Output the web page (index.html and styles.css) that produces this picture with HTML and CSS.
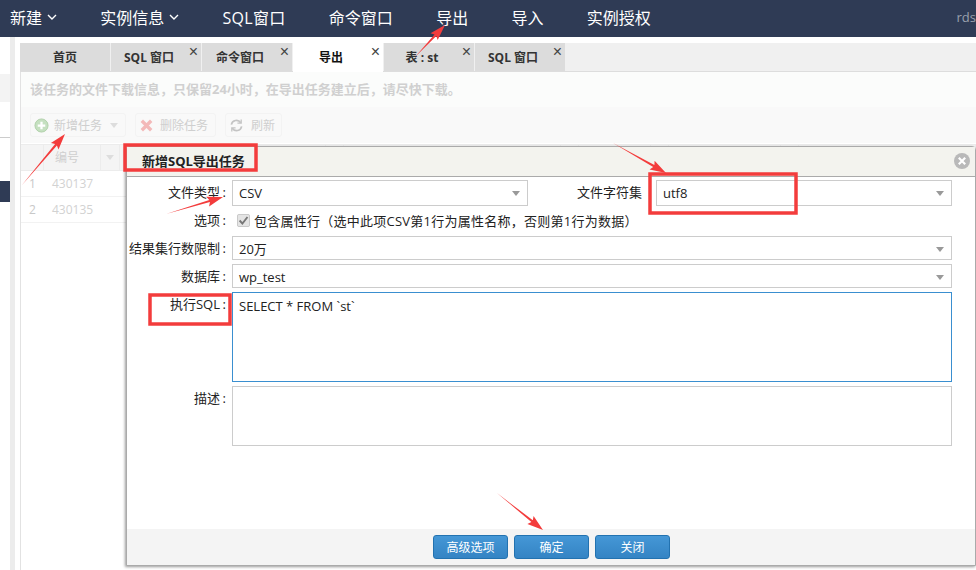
FILE: index.html
```html
<!DOCTYPE html>
<html lang="zh-CN">
<head>
<meta charset="utf-8">
<title>新增SQL导出任务</title>
<link rel="stylesheet" href="styles.css">
</head>
<body>
<nav class="nav">
  <span class="nav-item">新建<svg class="chev" viewBox="0 0 10 6"><path d="M1 1l4 4 4-4"/></svg></span>
  <span class="nav-item">实例信息<svg class="chev" viewBox="0 0 10 6"><path d="M1 1l4 4 4-4"/></svg></span>
  <span class="nav-item nav-sql">SQL窗口</span>
  <span class="nav-item">命令窗口</span>
  <span class="nav-item">导出</span>
  <span class="nav-item">导入</span>
  <span class="nav-item">实例授权</span>
  <span class="nav-user">rds</span>
</nav>
<div class="main">
  <aside class="side">
    <div class="side-list">
      <div class="side-gray"></div>
      <div class="side-line"></div>
      <div class="side-active"></div>
    </div>
    <div class="side-bar"></div>
    <div class="side-space"></div>
  </aside>
  <section class="work">
    <div class="tabs">
      <div class="tab tab-home">首页</div>
      <div class="tab">SQL 窗口<span class="tab-x">×</span></div>
      <div class="tab">命令窗口<span class="tab-x">×</span></div>
      <div class="tab tab-on">导出<span class="tab-x">×</span></div>
      <div class="tab">表 : st<span class="tab-x">×</span></div>
      <div class="tab">SQL 窗口<span class="tab-x">×</span></div>
    </div>
    <div class="notice">该任务的文件下载信息，只保留24小时，在导出任务建立后，请尽快下载。</div>
    <div class="toolbar">
      <div class="tool tool-add">
        <svg class="tool-ico" viewBox="0 0 16 16"><circle cx="8" cy="8" r="7" fill="#c5e0c0" stroke="#b0d0aa"/><path d="M8 4v8M4 8h8" stroke="#fff" stroke-width="2.4"/></svg>
        新增任务<i class="tool-caret"></i>
      </div>
      <div class="tool tool-del">
        <svg class="tool-ico" viewBox="0 0 16 16"><path d="M3 3l10 10M13 3L3 13" stroke="#f3b9b9" stroke-width="3.6"/></svg>
        删除任务
      </div>
      <div class="tool tool-ref">
        <svg class="tool-ico" viewBox="0 0 16 16" fill="none" stroke="#c4c4c4" stroke-width="1.8"><path d="M2.500 7a5.500 5.500 0 0 1 10-2M13.500 9a5.500 5.500 0 0 1-10 2"/><path d="M13 1.500v4H9M3 14.500v-4h4" stroke-width="1.400"/></svg>
        刷新
      </div>
    </div>
    <div class="grid-head">
      <div class="gh"></div>
      <div class="gh gh-name">编号</div>
      <div class="gh gh-menu"><i class="tool-caret"></i></div>
      <div class="gh"></div><div class="gh"></div>
      <div class="gh"></div><div class="gh"></div>
      <div class="gh"></div><div class="gh"></div>
      <div class="gh"></div><div class="gh"></div>
      <div class="gh"></div>
    </div>
    <div class="grid-row"><span class="grid-no">1</span><span class="grid-id">430137</span></div>
    <div class="grid-row"><span class="grid-no">2</span><span class="grid-id">430135</span></div>
  </section>
</div>

<div class="modal">
  <header class="modal-head">
    <span class="modal-title">新增SQL导出任务</span>
    <svg class="modal-close" viewBox="0 0 16 16"><circle cx="8" cy="8" r="8" fill="#b9b9b9"/><path d="M4.800 4.800l6.400 6.400M11.200 4.800l-6.400 6.400" stroke="#fff" stroke-width="2.200"/></svg>
  </header>
  <div class="form">
    <label class="lbl">文件类型<span class="colon">:</span></label>
    <div class="field-pair">
      <div class="sel">CSV<i class="sel-caret"></i></div>
      <label class="lbl lbl-mid">文件字符集</label>
      <div class="sel">utf8<i class="sel-caret"></i></div>
    </div>
    <label class="lbl">选项<span class="colon">:</span></label>
    <div class="opt">
      <svg class="check" viewBox="0 0 14 14"><rect x=".5" y=".5" width="13" height="13" rx="1.500" fill="#e4e4e4" stroke="#c4c4c4"/><path d="M2.800 7l3 3.200 5.500-7" fill="none" stroke="#777" stroke-width="2"/></svg>
      包含属性行（选中此项CSV第1行为属性名称，否则第1行为数据）
    </div>
    <label class="lbl">结果集行数限制<span class="colon">:</span></label>
    <div class="sel">20万<i class="sel-caret"></i></div>
    <label class="lbl">数据库<span class="colon">:</span></label>
    <div class="sel">wp_test<i class="sel-caret"></i></div>
    <label class="lbl">执行SQL<span class="colon">:</span></label>
    <div class="area area-on">SELECT * FROM `st`</div>
    <label class="lbl">描述<span class="colon">:</span></label>
    <div class="area area-desc"></div>
  </div>
  <footer class="modal-foot">
    <button class="btn">高级选项</button>
    <button class="btn">确定</button>
    <button class="btn">关闭</button>
  </footer>
</div>

<svg class="marks" viewBox="0 0 976 570">
  <g class="mark-box">
    <rect x="125" y="145" width="131" height="25"/>
    <rect x="650" y="174" width="146" height="39"/>
    <rect x="150" y="295" width="80" height="29"/>
  </g>
  <g class="mark-arrow">
    <polygon points="415,57 434.500,34.400 430.500,33.300 445,25 437.700,40.100 436.300,36"/>
    <polygon points="22,185 55.100,143.900 50.900,143 65,134 58.500,149.400 56.900,145.500"/>
    <polygon points="166,214 209.300,199.900 206.300,196.800 223,197 209.100,206.400 209.900,202.100"/>
    <polygon points="613,143 654.400,165.100 654.600,160.700 666,173 649.600,169.500 653.200,167.100"/>
    <polygon points="497,493 532.800,520.300 533.600,516.100 543,530 527.400,523.900 531.400,522.100"/>
  </g>
</svg>
</body>
</html>
```
FILE: styles.css
```css
* { box-sizing: border-box; }
html, body { margin: 0; height: 100%; }
body {
  width: 976px;
  height: 570px;
  overflow: hidden;
  position: relative;
  background: #fff;
  color: #222;
  font-family: "Open Sans", "Noto Sans CJK SC", sans-serif;
  font-size: 13px;
}

/* top nav */
.nav {
  height: 37px;
  background: #2f3b55;
  display: flex;
  align-items: center;
  gap: 43.250px;
  padding: 0 0 3px 10px;
  color: #fff;
  font-size: 16px;
}
.nav-item { display: flex; align-items: center; white-space: nowrap; }
.nav-sql { letter-spacing: .3px; }
.chev { width: 10px; height: 6px; margin-left: 5px; fill: none; stroke: #fff; stroke-width: 1.4; }
.nav-user { flex: 1; text-align: right; font-size: 13px; color: #9aa0ad; }

/* shell */
.main { display: flex; height: 533px; }
.side { width: 20px; display: flex; flex: none; }
.side-list { width: 10px; }
.side-gray { height: 28px; margin-top: 37px; background: #f3f3f3; }
.side-line { height: 1px; margin-top: 35px; background: #ccc; }
.side-active { height: 21px; margin-top: 43px; background: #2f3b55; }
.side-bar { width: 5px; background: #ececec; }
.side-space { width: 5px; }
.work { flex: 1; min-width: 0; border-left: 1px solid #e2e2e2; margin-top: 6px; background: linear-gradient(#fbfcfb 0, #fbfcfb 64px, #f9f9f9 64px, #f9f9f9 100px, #fff 100px); }

/* tabs */
.tabs {
  height: 29px;
  margin-left: -1px;
  display: flex;
  gap: 1px;
  background: #f0f0f0;
  border-bottom: 1px solid #ddd;
}
.tab {
  position: relative;
  width: 90px;
  height: 28px;
  padding-right: 14px;
  background: #dcdcdc;
  color: #333;
  font-size: 12px;
  font-weight: 700;
  line-height: 29px;
  text-align: center;
  white-space: nowrap;
}
.tab-home { padding-right: 0; }
.tab-on { background: #fff; color: #111; height: 29px; }
.tab-x {
  position: absolute;
  top: 2px;
  right: 3px;
  font-family: "Liberation Sans", sans-serif;
  font-size: 16px;
  font-weight: 400;
  line-height: 14px;
  color: #444;
}

/* dimmed background page */
.notice {
  height: 36px;
  padding: 0 0 2px 9px;
  line-height: 34px;
  font-size: 13px;
  font-weight: 700;
  color: #d0d0d0;
}
.toolbar { height: 36px; padding: 5px 0 0 9px; display: flex; gap: 9px; }
.tool {
  height: 24px;
  display: flex;
  align-items: center;
  padding-left: 3px;
  border: 1px solid #f3f3f3;
  border-radius: 3px;
  color: #cfcfcf;
  font-size: 12px;
}
.tool-add { width: 96px; gap: 5px; }
.tool-del { width: 81px; gap: 6px; }
.tool-ref { width: 57px; gap: 7px; }
.tool-ico { width: 15px; height: 15px; flex: none; }
.tool-caret {
  width: 0;
  height: 0;
  margin-left: 3px;
  border: 4px solid transparent;
  border-top: 5px solid #ddd;
  border-bottom: 0;
}
.grid-head {
  height: 27px;
  display: grid;
  grid-template-columns: 23px 57px 19px 206px 18px 217px 18px 72px 18px 112px 18px 1fr;
  background: #f4f4f4;
  border-top: 1px solid #ececec;
  border-bottom: 1px solid #ececec;
}
.gh { border-right: 1px solid #ececec; color: #cfcfcf; font-size: 12px; line-height: 25px; text-align: center; }
.gh-name { text-align: left; padding-left: 11px; }
.gh-menu { display: flex; align-items: center; justify-content: center; }
.gh-menu .tool-caret { margin-left: 0; }
.grid-row {
  width: 105px;
  height: 26px;
  display: flex;
  align-items: center;
  border-bottom: 1px solid #f2f2f2;
  color: #d2d2d2;
  font-size: 12px;
}
.grid-no { width: 31px; padding-left: 8px; color: #c8c8c8; }

/* modal */
.modal {
  position: absolute;
  left: 126px;
  top: 146px;
  width: 850px;
  height: 420px;
  display: flex;
  flex-direction: column;
  background: #fff;
  border: 1px solid #aaa;
  border-radius: 4px 4px 0 0;
  box-shadow: -1px 1px 3px rgba(0, 0, 0, .4);
}
.modal-head {
  height: 30px;
  flex: none;
  display: flex;
  align-items: center;
  justify-content: space-between;
  padding: 0 5px 2px 15px;
  background: #f3f3ee;
  border-bottom: 1px solid #aaa;
}
.modal-title { font-size: 13px; font-weight: 700; color: #222; }
.modal-close { width: 16px; height: 16px; }
.form {
  flex: 1;
  display: grid;
  grid-template-columns: 102px 720px;
  grid-template-rows: 24px 24px 24px 24px 90px 60px;
  column-gap: 3px;
  row-gap: 4px;
  align-content: start;
  padding-top: 3px;
}
.lbl {
  text-align: right;
  line-height: 24px;
  font-size: 13px;
  color: #222;
  white-space: nowrap;
}
.colon { display: inline-block; width: 9px; padding-right: 3px; text-align: right; }
.field-pair { display: grid; grid-template-columns: 296px 1fr 296px; }
.lbl-mid { padding-right: 14px; }
.sel {
  position: relative;
  border: 1px solid #ccc;
  padding-left: 6px;
  line-height: 24px;
  font-size: 13px;
  color: #222;
  background: #fff;
}
.sel-caret {
  position: absolute;
  top: 10px;
  right: 7px;
  width: 0;
  height: 0;
  border: 4px solid transparent;
  border-top: 5px solid #999;
  border-bottom: 0;
}
.opt {
  display: flex;
  align-items: center;
  gap: 4px;
  padding-left: 5px;
  font-size: 13px;
  letter-spacing: .25px;
  color: #222;
  white-space: nowrap;
}
.check { width: 13px; height: 13px; flex: none; }
.area { border: 1px solid #ccc; padding: 4px 6px; font-size: 13px; line-height: 18px; color: #222; }
.area-on { border-color: #3a8fd0; }
.modal-foot {
  height: 36px;
  flex: none;
  display: flex;
  justify-content: center;
  align-items: center;
  gap: 6px;
  padding-left: 1px;
  background: #f4f4f4;
}
.btn {
  width: 75px;
  height: 24px;
  padding: 0;
  border: 1px solid #2272b0;
  border-radius: 3px;
  background: linear-gradient(#4597d6, #3484c4);
  color: #fff;
  font: 12px "Open Sans", "Noto Sans CJK SC", sans-serif;
}

/* hand-drawn annotations over the screenshot */
.marks {
  position: absolute;
  left: 0;
  top: 0;
  width: 976px;
  height: 570px;
  pointer-events: none;
}
.mark-box { fill: none; stroke: #f33c3c; stroke-width: 3.5; }
.mark-arrow { fill: #f33c3c; }
```
